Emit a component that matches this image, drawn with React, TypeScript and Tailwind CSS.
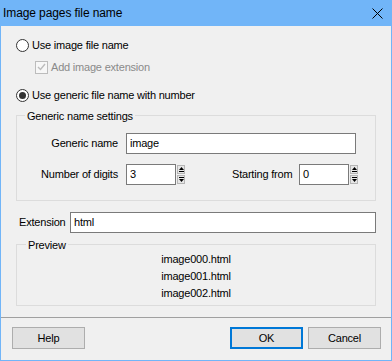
const PREVIEW = ["image000.html", "image001.html", "image002.html"];

function Radio({ checked }: { checked?: boolean }) {
  return (
    <span className="w-[13px] h-[13px] rounded-full border border-[#333333] bg-white flex items-center justify-center shrink-0">
      {checked && <span className="w-[7px] h-[7px] rounded-full bg-[#333333]" />}
    </span>
  );
}

function Spinner() {
  return (
    <div className="flex flex-col gap-[1px] ml-[1px]">
      <span className="w-[8px] h-[9px] border border-[#b5b5b5] bg-[#e6e6e6] flex flex-col items-center justify-center gap-[1px]">
        <svg width="5" height="3" viewBox="0 0 5 3">
          <path d="M0 3 L2.5 0 L5 3 Z" fill="#000" />
        </svg>
        <span className="w-[5px] h-[1px] bg-black" />
      </span>
      <span className="w-[8px] h-[9px] border border-[#b5b5b5] bg-[#e6e6e6] flex flex-col items-center justify-center gap-[1px]">
        <span className="w-[5px] h-[1px] bg-black" />
        <svg width="5" height="3" viewBox="0 0 5 3">
          <path d="M0 0 L5 0 L2.5 3 Z" fill="#000" />
        </svg>
      </span>
    </div>
  );
}

function Input({ value, width }: { value: string; width: string }) {
  return (
    <div className={`${width} h-[21px] border border-[#7a7a7a] bg-white flex items-center pl-[3px]`}>
      {value}
    </div>
  );
}

export default function App() {
  return (
    <div
      className="w-[392px] h-[361px] bg-[#f0f0f0] border-x border-b border-[#71b5f8] flex flex-col text-[11px] tracking-[-0.2px] text-black"
      style={{ fontFamily: '"Liberation Sans", Arial, sans-serif' }}
    >
      {/* Title bar */}
      <div className="h-[26px] bg-[#71b5f8] flex items-center justify-between pl-[3px] pr-[9px] -mx-[1px]">
        <span className="text-[12px] tracking-[-0.1px]">Image pages file name</span>
        <svg width="11" height="11" viewBox="0 0 11 11">
          <path d="M0.5 0.5 L10.5 10.5 M10.5 0.5 L0.5 10.5" stroke="#000" strokeWidth="1" />
        </svg>
      </div>

      <div className="flex flex-col pl-[15px]">
        <label className="flex items-center gap-[3px] h-[16px] mt-[11px]">
          <Radio />
          <span>Use image file name</span>
        </label>

        <label className="flex items-center gap-[3px] h-[16px] mt-[6px] ml-[19px] text-[#8a8a8a]">
          <span className="w-[13px] h-[13px] border border-[#bcbcbc] bg-[#f7f7f7] flex items-center justify-center">
            <svg width="9" height="8" viewBox="0 0 9 8">
              <path d="M1 4 L3.5 6.5 L8 1" stroke="#bcbcbc" strokeWidth="1.4" fill="none" />
            </svg>
          </span>
          <span>Add image extension</span>
        </label>

        <label className="flex items-center gap-[3px] h-[16px] mt-[12px]">
          <Radio checked />
          <span>Use generic file name with number</span>
        </label>

        {/* Generic name settings */}
        <div className="relative w-[360px] border border-[#dcdcdc] mt-[12px] pt-[17px] pb-[15px]">
          <span className="absolute -top-[8px] left-[8px] px-[2px] bg-[#f0f0f0]">
            Generic name settings
          </span>
          <div className="flex items-center">
            <span className="w-[101px] text-right">Generic name</span>
            <div className="ml-[8px]">
              <Input value="image" width="w-[230px]" />
            </div>
          </div>
          <div className="flex items-center mt-[10px]">
            <span className="w-[101px] text-right">Number of digits</span>
            <div className="ml-[8px] flex items-center">
              <Input value="3" width="w-[50px]" />
              <Spinner />
            </div>
            <span className="ml-[47px] w-[67px]">Starting from</span>
            <div className="flex items-center">
              <Input value="0" width="w-[50px]" />
              <Spinner />
            </div>
          </div>
        </div>

        {/* Extension */}
        <div className="flex items-center mt-[11px]">
          <span className="w-[54px] pl-[3px]">Extension</span>
          <Input value="html" width="w-[306px]" />
        </div>

        {/* Preview */}
        <div className="relative w-[360px] border border-[#dcdcdc] mt-[11px] pt-[6px] pb-[3px] flex flex-col items-center">
          <span className="absolute -top-[8px] left-[9px] px-[2px] bg-[#f0f0f0]">Preview</span>
          {PREVIEW.map((p) => (
            <span key={p} className="h-[17px] leading-[17px]">
              {p}
            </span>
          ))}
        </div>
      </div>

      <div className="h-[1px] bg-[#a0a0a0] mt-[11px]" />

      <div className="flex items-center pl-[11px] pr-[10px] mt-[9px]">
        <button className="w-[73px] h-[22px] border border-[#adadad] bg-[#e1e1e1]">Help</button>
        <button className="ml-auto w-[73px] h-[22px] border-2 border-[#0078d7] bg-[#e1e1e1]">OK</button>
        <button className="ml-[5px] w-[73px] h-[22px] border border-[#adadad] bg-[#e1e1e1]">Cancel</button>
      </div>
    </div>
  );
}
